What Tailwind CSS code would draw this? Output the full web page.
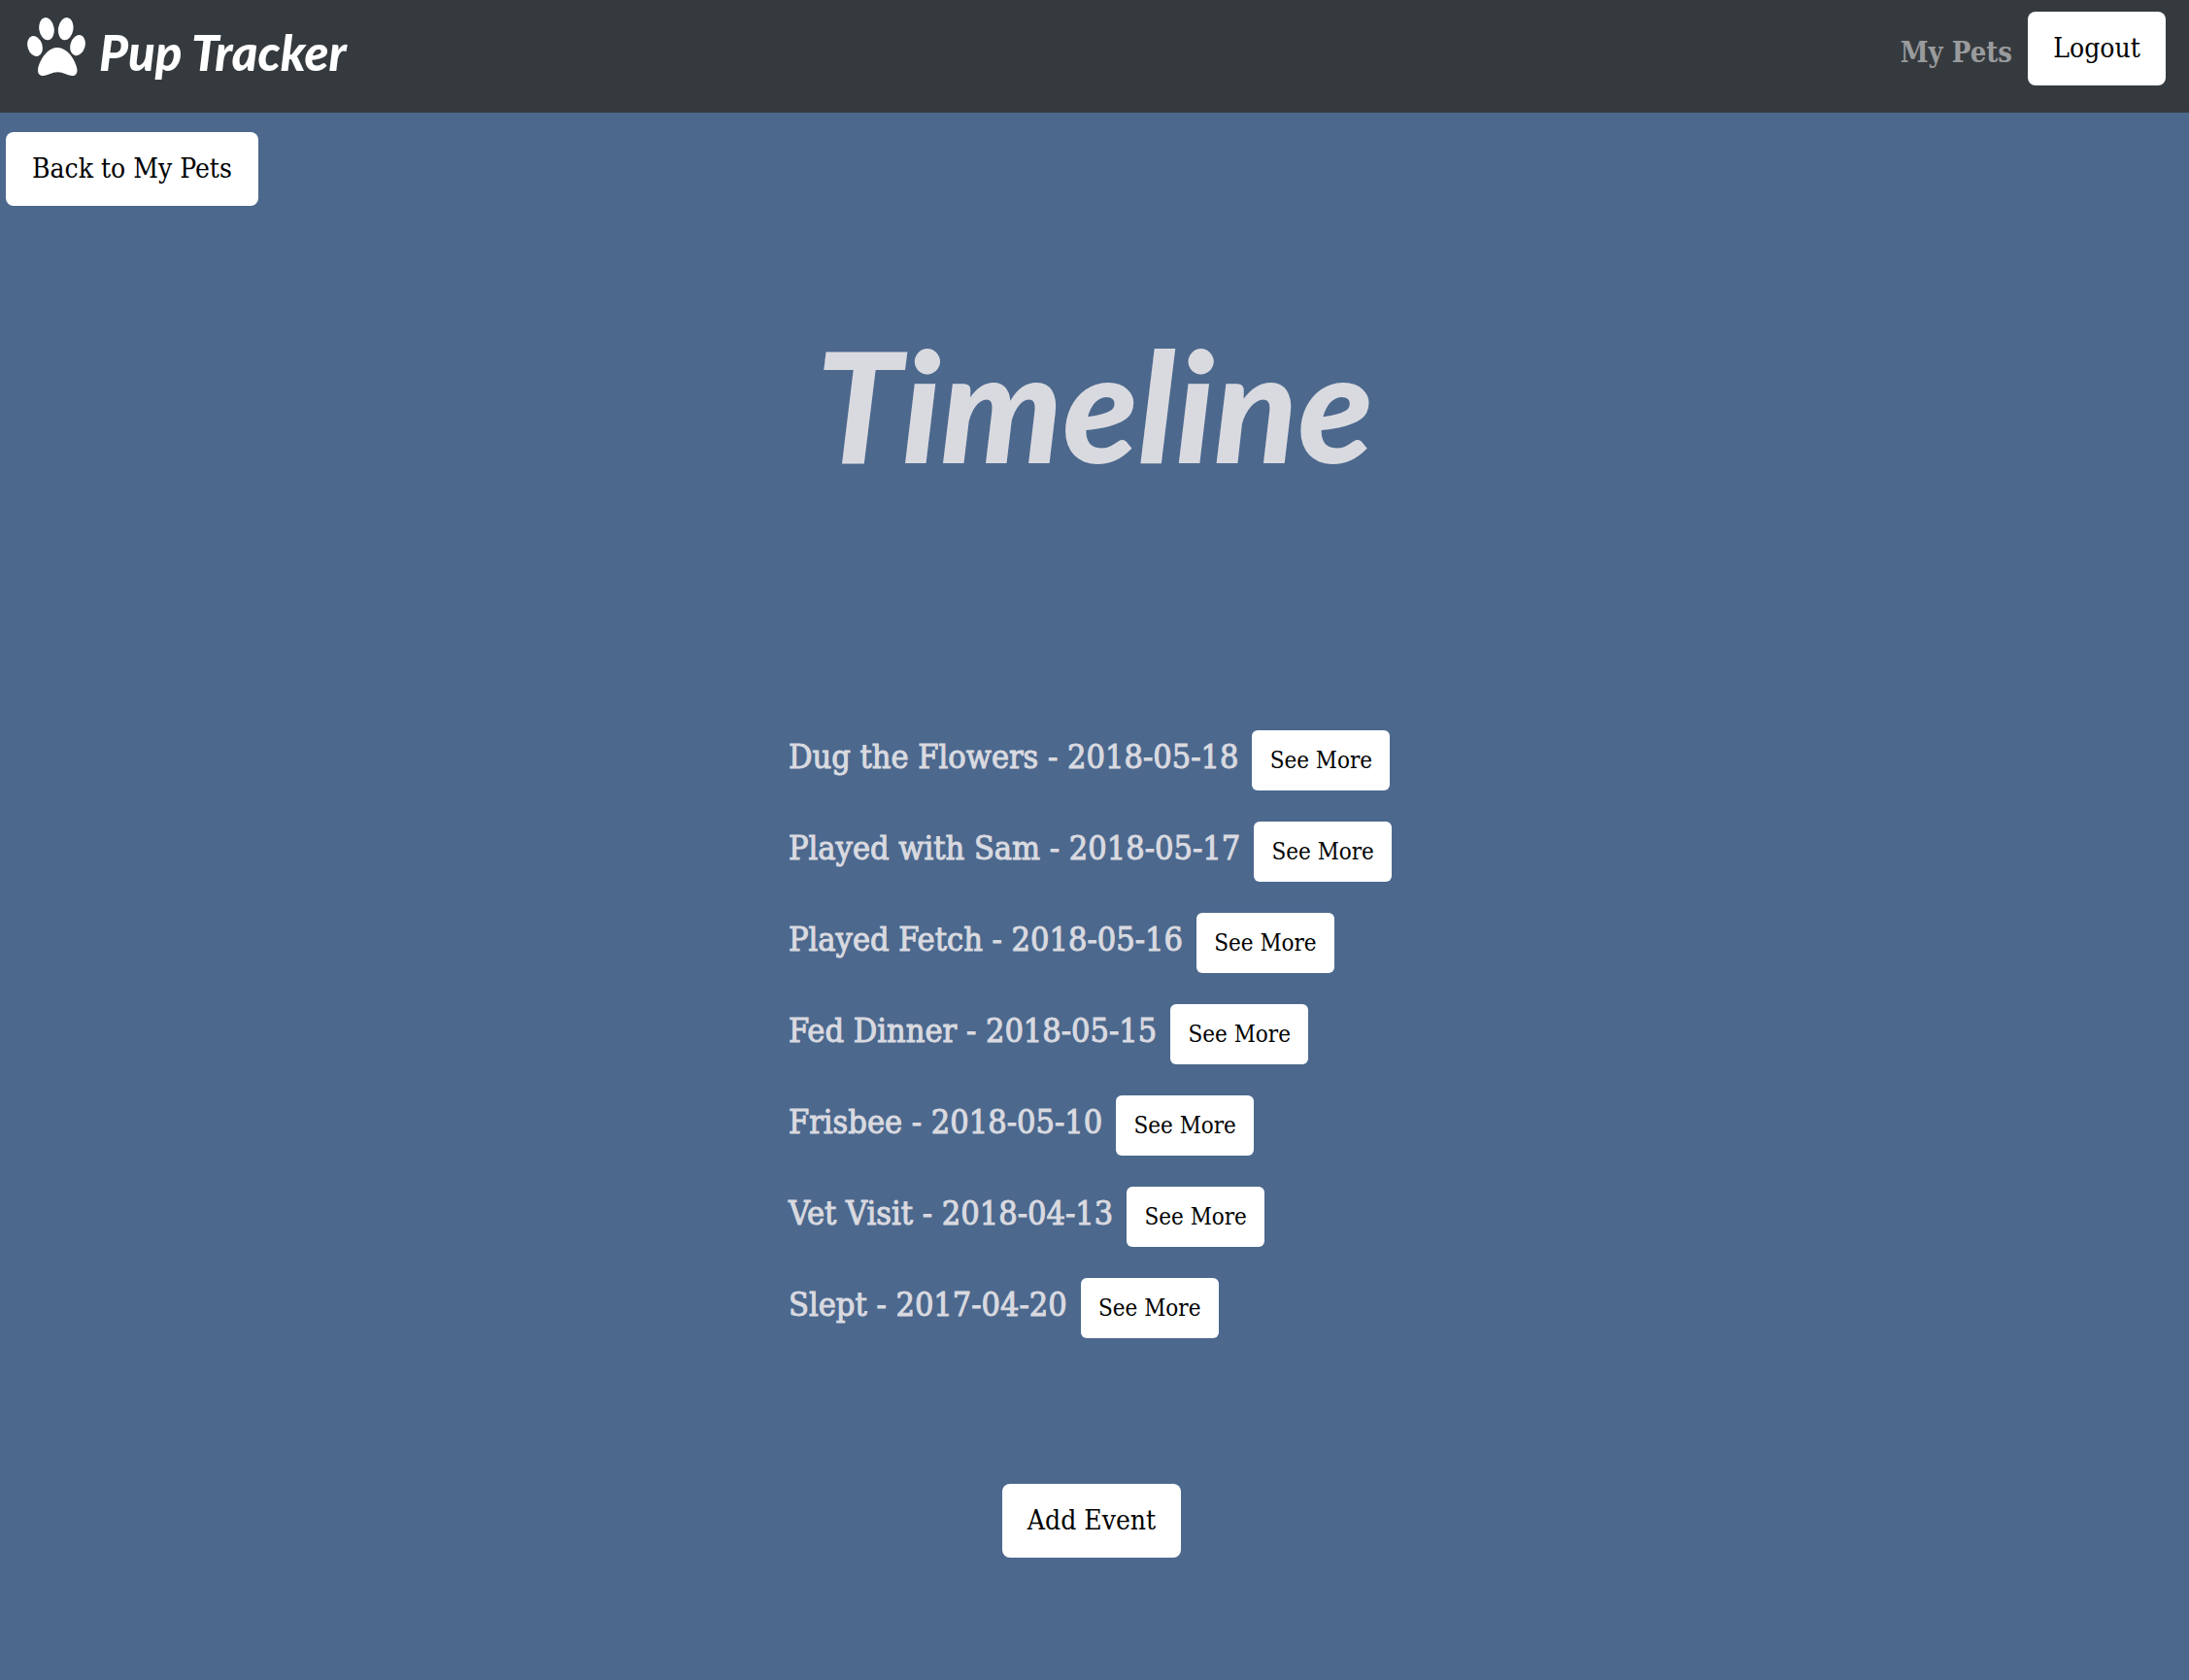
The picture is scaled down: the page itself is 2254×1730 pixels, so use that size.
<!DOCTYPE html>
<html lang="en">
<head>
<meta charset="utf-8">
<title>Pup Tracker</title>
<script src="https://cdn.jsdelivr.net/npm/@tailwindcss/browser@4"></script>
</head>
<body class="min-h-screen bg-[#4c688d] font-['DejaVu_Serif_Condensed','DejaVu_Serif',serif] text-[#d9dae0]">
<header class="flex h-29 items-start justify-between bg-[#353a3e] pt-3 pr-6 pl-7">
  <a href="#" class="flex items-start gap-3.5 pt-1.5 text-white">
    <svg class="size-15" viewBox="0 0 60 60" fill="currentColor" aria-hidden="true">
      <ellipse cx="20" cy="11.700" rx="7.700" ry="11.700" transform="rotate(-9 20 11.700)"/>
      <ellipse cx="39.700" cy="11.700" rx="7.700" ry="11.700" transform="rotate(9 39.700 11.700)"/>
      <ellipse cx="8" cy="29.500" rx="7.500" ry="10.800" transform="rotate(-17 8 29.500)"/>
      <ellipse cx="52" cy="28.700" rx="7.500" ry="10.800" transform="rotate(17 52 28.700)"/>
      <path d="M30.700 31C39 31 45.500 38 49 46C50.500 49.500 51.500 52.500 51.500 54.500C51.500 58 49.500 60 46.500 60C41 60 37.500 56.300 31.500 56.300C25 56.300 21.500 60 16.500 60C13 60 11 58 11 54.500C11 51.500 12 48.500 13.500 45.500C17.500 37.500 23.500 31 30.700 31Z"/>
    </svg>
    <span class="font-['Lato',sans-serif] text-[51px] leading-[72px] font-black italic">Pup Tracker</span>
  </a>
  <nav class="flex items-start gap-4">
    <a href="#" class="pt-6 text-[29px] leading-9 font-bold text-[#999b9d]">My Pets</a>
    <button class="h-19 w-[142px] rounded-lg bg-white text-[28px] text-black">Logout</button>
  </nav>
</header>
<main>
  <div class="px-1.5 pt-5">
    <button class="h-19 w-[260px] rounded-lg bg-white text-[28px] text-black">Back to My Pets</button>
  </div>
  <h1 class="pt-24 text-center font-['Lato',sans-serif] text-[158px] leading-[216px] font-black italic">Timeline</h1>
  <section class="flex flex-col items-center pt-57 pr-1.5">
    <ul class="flex w-[624px] flex-col gap-8 text-[34px] leading-10 whitespace-nowrap">
      <li class="flex items-baseline gap-3.5"><span class="[-webkit-text-stroke:1px]">Dug the Flowers - 2018-05-18</span> <button class="h-[62px] w-[142px] shrink-0 rounded-md bg-white text-[24px] text-black">See More</button></li>
      <li class="flex items-baseline gap-3.5"><span class="[-webkit-text-stroke:1px]">Played with Sam - 2018-05-17</span> <button class="h-[62px] w-[142px] shrink-0 rounded-md bg-white text-[24px] text-black">See More</button></li>
      <li class="flex items-baseline gap-3.5"><span class="[-webkit-text-stroke:1px]">Played Fetch - 2018-05-16</span> <button class="h-[62px] w-[142px] shrink-0 rounded-md bg-white text-[24px] text-black">See More</button></li>
      <li class="flex items-baseline gap-3.5"><span class="[-webkit-text-stroke:1px]">Fed Dinner - 2018-05-15</span> <button class="h-[62px] w-[142px] shrink-0 rounded-md bg-white text-[24px] text-black">See More</button></li>
      <li class="flex items-baseline gap-3.5"><span class="[-webkit-text-stroke:1px]">Frisbee - 2018-05-10</span> <button class="h-[62px] w-[142px] shrink-0 rounded-md bg-white text-[24px] text-black">See More</button></li>
      <li class="flex items-baseline gap-3.5"><span class="[-webkit-text-stroke:1px]">Vet Visit - 2018-04-13</span> <button class="h-[62px] w-[142px] shrink-0 rounded-md bg-white text-[24px] text-black">See More</button></li>
      <li class="flex items-baseline gap-3.5"><span class="[-webkit-text-stroke:1px]">Slept - 2017-04-20</span> <button class="h-[62px] w-[142px] shrink-0 rounded-md bg-white text-[24px] text-black">See More</button></li>
    </ul>
    <button class="mt-[150px] mb-24 h-19 w-[184px] rounded-lg bg-white text-[28px] text-black">Add Event</button>
  </section>
</main>
</body>
</html>
